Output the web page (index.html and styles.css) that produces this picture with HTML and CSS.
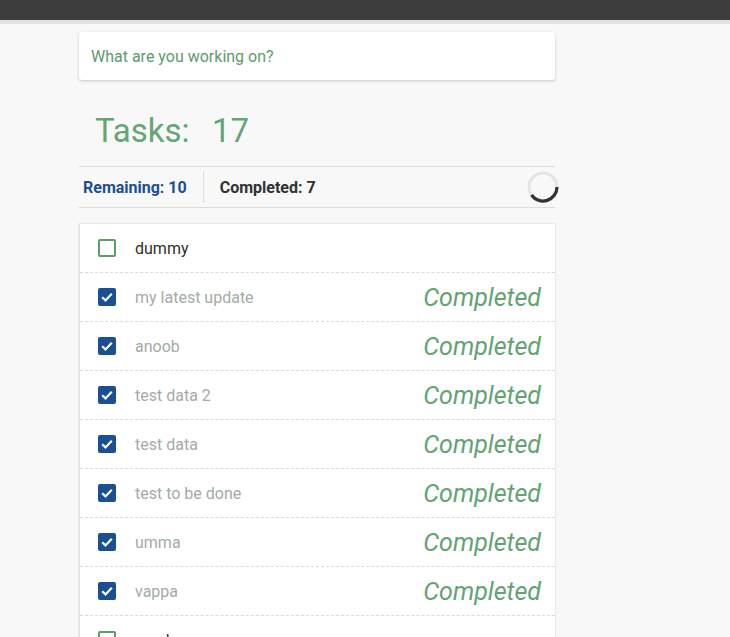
FILE: index.html
```html
<!DOCTYPE html>
<html>
<head>
<meta charset="utf-8">
<link rel="stylesheet" href="styles.css">
</head>
<body>
<div class="topbar"></div>
<div class="strip"></div>
<main class="wrap">
  <div class="input-card">What are you working on?</div>
  <h1 class="heading">Tasks:&nbsp; <span class="count">17</span></h1>
  <div class="stats">
    <div class="stat remaining">Remaining: 10</div>
    <div class="stat completed">Completed: 7</div>
    <svg class="spinner" width="34" height="34" viewBox="0 0 34 34">
      <circle cx="17" cy="17" r="14" fill="none" stroke="#e2e5e3" stroke-width="3"/>
      <path d="M31 17 A14 14 0 0 1 5.5 25" fill="none" stroke="#333" stroke-width="3.2"/>
    </svg>
  </div>
  <ul class="list">
    <li class="row"><span class="box"></span><span class="label">dummy</span></li>
    <li class="row done"><span class="box checked"><svg width="18" height="18" viewBox="0 0 18 18"><path d="M4.2 9.2 L7.5 12.4 L13.8 5.8" fill="none" stroke="#fff" stroke-width="2.2"/></svg></span><span class="label">my latest update</span><span class="status">Completed</span></li>
    <li class="row done"><span class="box checked"><svg width="18" height="18" viewBox="0 0 18 18"><path d="M4.2 9.2 L7.5 12.4 L13.8 5.8" fill="none" stroke="#fff" stroke-width="2.2"/></svg></span><span class="label">anoob</span><span class="status">Completed</span></li>
    <li class="row done"><span class="box checked"><svg width="18" height="18" viewBox="0 0 18 18"><path d="M4.2 9.2 L7.5 12.4 L13.8 5.8" fill="none" stroke="#fff" stroke-width="2.2"/></svg></span><span class="label">test data 2</span><span class="status">Completed</span></li>
    <li class="row done"><span class="box checked"><svg width="18" height="18" viewBox="0 0 18 18"><path d="M4.2 9.2 L7.5 12.4 L13.8 5.8" fill="none" stroke="#fff" stroke-width="2.2"/></svg></span><span class="label">test data</span><span class="status">Completed</span></li>
    <li class="row done"><span class="box checked"><svg width="18" height="18" viewBox="0 0 18 18"><path d="M4.2 9.2 L7.5 12.4 L13.8 5.8" fill="none" stroke="#fff" stroke-width="2.2"/></svg></span><span class="label">test to be done</span><span class="status">Completed</span></li>
    <li class="row done"><span class="box checked"><svg width="18" height="18" viewBox="0 0 18 18"><path d="M4.2 9.2 L7.5 12.4 L13.8 5.8" fill="none" stroke="#fff" stroke-width="2.2"/></svg></span><span class="label">umma</span><span class="status">Completed</span></li>
    <li class="row done"><span class="box checked"><svg width="18" height="18" viewBox="0 0 18 18"><path d="M4.2 9.2 L7.5 12.4 L13.8 5.8" fill="none" stroke="#fff" stroke-width="2.2"/></svg></span><span class="label">vappa</span><span class="status">Completed</span></li>
    <li class="row"><span class="box"></span><span class="label">my dear</span></li>
  </ul>
</main>
</body>
</html>
```

FILE: styles.css
```css
* { box-sizing: border-box; }
html, body { margin: 0; padding: 0; }
body {
  background: #f7f8f7;
  font-family: Roboto, "Liberation Sans", sans-serif;
  overflow: hidden;
  height: 637px;
}
.topbar { height: 20px; background: #3c3c3c; }
.strip { height: 4px; background: #dfe4e0; }
.wrap {
  width: 476px;
  margin-left: 79px;
}
.input-card {
  margin-top: 8px;
  height: 48px;
  background: #fff;
  border-radius: 3px;
  box-shadow: 0 1px 3px rgba(60, 80, 70, 0.28);
  padding-left: 12px;
  display: flex;
  align-items: center;
  font-size: 16px;
  color: #5b9c69;
}
.heading {
  margin: 29px 0 13px;
  padding-left: 16px;
  font-size: 33px;
  line-height: 44px;
  font-weight: 400;
  color: #64a574;
}
.count { margin-left: 6px; }
.stats {
  position: relative;
  height: 42px;
  border-top: 1px solid #d9dedb;
  border-bottom: 1px solid #d9dedb;
  display: flex;
  align-items: center;
}
.stat {
  font-size: 16px;
  font-weight: 700;
  height: 32px;
  display: flex;
  align-items: center;
}
.remaining { color: #1c4f8e; padding: 0 16px 0 4px; border-right: 1px solid #dde1de; }
.completed { color: #2f3230; padding-left: 16px; }
.spinner {
  position: absolute;
  right: -5px;
  top: 3px;
}
.list {
  list-style: none;
  margin: 16px 0 0;
  padding: 0;
  background: #fff;
  box-shadow: 0 0 2px rgba(60, 80, 70, 0.25);
  border-left: 1px solid #e1e5e2;
}
.row {
  height: 49px;
  border-bottom: 1px dashed #d6ddd8;
  display: flex;
  align-items: center;
  padding: 0 14px 0 18px;
}
.box {
  width: 18px;
  height: 18px;
  border: 2px solid #5b9c69;
  border-radius: 2px;
  flex: none;
}
.box.checked {
  border: none;
  background: #1b4f93;
}
.box svg { display: block; }
.label {
  margin-left: 19px;
  font-size: 16px;
  color: #2c302e;
  flex: 1;
}
.done .label { color: #a3aba6; }
.status {
  font-size: 25px;
  font-style: italic;
  color: #62a370;
}
```
